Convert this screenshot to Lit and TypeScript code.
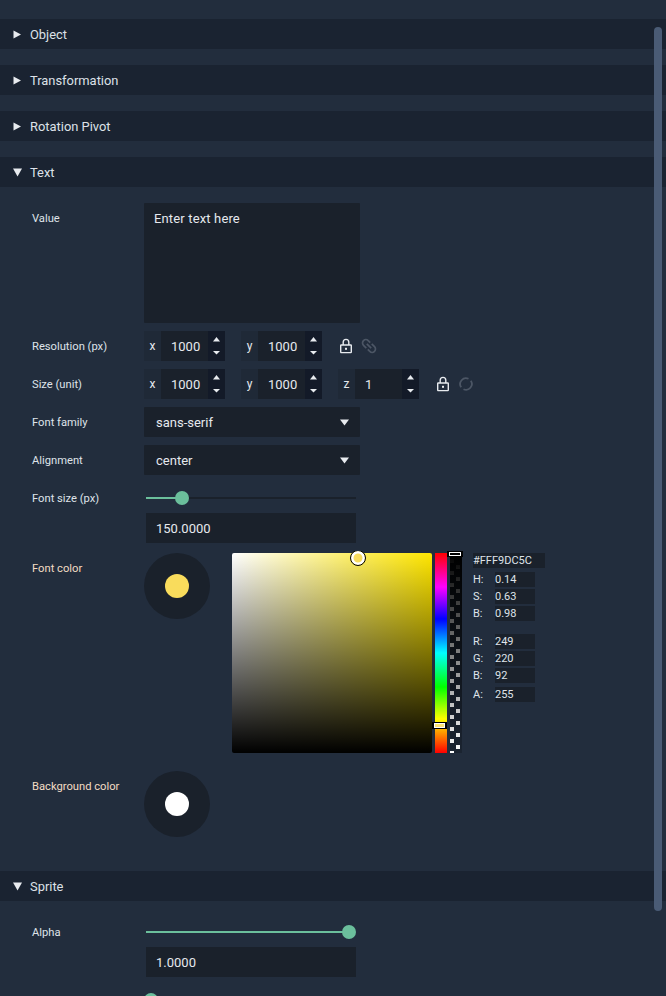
import { LitElement, html, css, svg } from 'lit';
import { customElement } from 'lit/decorators.js';

const lock = html`<svg class="ico lock" width="14" height="16" viewBox="0 0 14 16" fill="none" stroke="#e8ebef" stroke-width="1.4">
  <path d="M4.2 7V4.2a2.8 2.8 0 0 1 5.6 0V7" />
  <rect x="1.7" y="7" width="10.6" height="7.6" rx="0.6" />
  <rect x="6" y="9.8" width="2" height="2" fill="#e8ebef" stroke="none" />
</svg>`;

const chain = html`<svg class="ico" width="16" height="16" viewBox="0 0 16 16" fill="none" stroke="#4c5665" stroke-width="1.7">
  <path d="M9.2 4.6 7.2 2.6a3.3 3.3 0 0 0-4.7 4.7L5.3 10.1" />
  <path d="M6.8 11.4 8.8 13.4a3.3 3.3 0 0 0 4.7-4.7L10.7 5.9" />
  <path d="M5.8 5.8 10.2 10.2" />
</svg>`;

const ring = html`<svg class="ico" width="16" height="16" viewBox="0 0 16 16" fill="none" stroke="#4c5665" stroke-width="1.8">
  <path d="M10.5 2.8A5.8 5.8 0 0 0 3.2 11.3" />
  <path d="M5.5 13.2A5.8 5.8 0 0 0 12.8 4.7" />
</svg>`;

const spinner = html`<div class="spin">
  <svg width="7" height="5" viewBox="0 0 7 5">${svg`<path d="M3.5 0 7 4.5H0z" fill="#e8ebef" />`}</svg>
  <svg width="7" height="4" viewBox="0 0 7 4">${svg`<path d="M0 0H7L3.5 3.5z" fill="#e8ebef" />`}</svg>
</div>`;

const alphaBar = html`<svg class="alpha-art" width="12" height="200" viewBox="0 0 12 200">
  <defs>
    <pattern id="cells" width="12" height="12" patternUnits="userSpaceOnUse">
      <rect x="0" y="6" width="4" height="4" fill="#fff" />
      <rect x="6" y="0" width="4" height="4" fill="#fff" />
    </pattern>
    <linearGradient id="fade" x1="0" y1="0" x2="0" y2="1">
      <stop offset="0" stop-color="#000" />
      <stop offset="1" stop-color="#000" stop-opacity="0" />
    </linearGradient>
  </defs>
  <rect width="12" height="200" fill="#1b2431" />
  <rect width="12" height="200" fill="url(#cells)" />
  <rect width="12" height="200" fill="url(#fade)" />
</svg>`;

@customElement('app-root')
export class AppRoot extends LitElement {
  static styles = css`
    :host {
      display: block;
      height: 996px;
      overflow: hidden;
      position: relative;
      background: #222d3d;
      color: #e6e9ee;
      font-family: Roboto, sans-serif;
      font-size: 13px;
    }
    .panel {
      padding-top: 19px;
    }
    .head {
      height: 30px;
      margin-bottom: 16px;
      display: flex;
      align-items: center;
      padding-left: 13px;
      gap: 8px;
      background: #1a2331;
      color: #dde1e8;
      font-size: 12.9px;
    }
    .head svg {
      width: 9px;
      height: 9px;
      flex: none;
    }
    .body {
      padding-left: 32px;
      display: flex;
      flex-direction: column;
    }
    .row {
      display: flex;
      align-items: flex-start;
      margin-bottom: 8px;
    }
    .label {
      width: 112px;
      height: 30px;
      flex: none;
      font-size: 11.2px;
      line-height: 32px;
      color: #dfe3e9;
    }
    .label.peach {
      color: #f3dcc4;
    }
    .area {
      width: 216px;
      height: 120px;
      box-sizing: border-box;
      padding: 8px 10px;
      background: #1a212b;
      border-radius: 1px;
      line-height: 16px;
      letter-spacing: 0.15px;
    }
    .nums {
      display: flex;
      align-items: center;
    }
    .num {
      display: flex;
      height: 30px;
      margin-right: 16px;
      line-height: 31px;
    }
    .pre {
      width: 17px;
      text-align: center;
      background: #1f2937;
      font-size: 12px;
    }
    .val {
      width: 47px;
      box-sizing: border-box;
      padding-left: 10px;
      background: #1a212b;
    }
    .spin {
      width: 17px;
      background: #131a28;
      display: flex;
      flex-direction: column;
      align-items: center;
      justify-content: space-between;
      padding: 6px 0;
      box-sizing: border-box;
    }
    .spin svg {
      display: block;
    }
    .ico {
      display: block;
      margin-right: 8px;
    }
    .lock {
      margin-left: 1px;
    }
    .select {
      width: 216px;
      height: 30px;
      box-sizing: border-box;
      padding: 0 12px;
      display: flex;
      align-items: center;
      justify-content: space-between;
      background: #1a212b;
      border-radius: 1px;
    }
    .select svg {
      margin-right: -1px;
    }
    .slider-col {
      margin-left: 2px;
      width: 210px;
    }
    .slider {
      height: 30px;
      position: relative;
      display: flex;
      align-items: flex-start;
    }
    .track {
      width: 100%;
      height: 2px;
      margin-top: 14px;
      background: linear-gradient(to right, #6bbf9c var(--p), #1a212b var(--p));
    }
    .thumb {
      position: absolute;
      top: 8px;
      width: 14px;
      height: 14px;
      margin-left: -7px;
      border-radius: 50%;
      background: #6bbf9c;
    }
    .field {
      height: 30px;
      padding-left: 10px;
      line-height: 31px;
      background: #1a212b;
    }
    .swatch {
      width: 66px;
      height: 66px;
      flex: none;
      border-radius: 50%;
      background: #1a212b;
      display: flex;
      align-items: center;
      justify-content: center;
    }
    .dot {
      width: 24px;
      height: 24px;
      border-radius: 50%;
    }
    .picker {
      display: flex;
      margin-left: 22px;
    }
    .sv {
      position: relative;
      width: 200px;
      height: 200px;
      border-radius: 2px;
      background:
        linear-gradient(to bottom, transparent, #000),
        linear-gradient(to right, #fff, #ffe600);
    }
    .sv i {
      position: absolute;
      left: 118px;
      top: -3px;
      width: 16px;
      height: 16px;
      box-sizing: border-box;
      border: 1.5px solid #000;
      box-shadow: inset 0 0 0 2.5px #fff;
      border-radius: 50%;
      background: #f9dc5c;
      clip-path: inset(1px 0 0 0);
    }
    .hue {
      position: relative;
      width: 12px;
      height: 200px;
      margin-left: 3px;
      background: linear-gradient(to bottom, #f00, #f0f 17%, #00f 33%, #0ff 50%, #0f0 67%, #ff0 83%, #f00);
    }
    .alpha {
      position: relative;
      width: 12px;
      height: 200px;
      margin-left: 3px;
    }
    .alpha-art {
      display: block;
    }
    .grip {
      position: absolute;
      box-sizing: border-box;
      border: solid #000;
      border-width: 1px 2px;
      box-shadow: inset 0 0 0 1px #fff;
    }
    .hue .grip {
      left: -3px;
      right: 0;
      top: 169px;
      height: 7px;
      background: rgba(255, 255, 255, 0.45);
    }
    .alpha .grip {
      left: -3px;
      right: -1px;
      top: -2px;
      height: 6px;
    }
    .vals {
      margin-left: 11px;
      font-size: 11px;
      color: #dfe3e9;
    }
    .hex {
      width: 72px;
      height: 15px;
      line-height: 15px;
      margin-bottom: 4px;
      background: #1a212b;
    }
    .line {
      display: flex;
      height: 15px;
      line-height: 15px;
      margin-bottom: 2px;
    }
    .line b {
      font-weight: 400;
      width: 22px;
    }
    .line span {
      width: 40px;
      background: #1a212b;
    }
    .line.sep {
      margin-top: 13px;
    }
    .line.a {
      margin-top: 4px;
    }
    .scroll {
      position: absolute;
      left: 654px;
      top: 27px;
      width: 8px;
      height: 884px;
      border-radius: 4px;
      background: #4a5b75;
    }
  `;

  private head(title: string, open: boolean) {
    return html`<div class="head">
      <svg viewBox="0 0 9 9"><path d=${open ? 'M0 .5H9L4.5 8.5z' : 'M.5 .5 8 4.5 .5 8.5z'} fill="#e8ebef" /></svg>
      <span>${title}</span>
    </div>`;
  }

  private num(prefix: string, value: string) {
    return html`<div class="num"><div class="pre">${prefix}</div><div class="val">${value}</div>${spinner}</div>`;
  }

  private select(value: string) {
    return html`<div class="select">
      <span>${value}</span>
      <svg width="9" height="7" viewBox="0 0 9 7"><path d="M0 .5H9L4.5 6.5z" fill="#e8ebef" /></svg>
    </div>`;
  }

  private slider(pct: number, value: string) {
    return html`<div class="slider-col">
      <div class="slider">
        <div class="track" style="--p:${pct}%"></div>
        <div class="thumb" style="left:${pct}%"></div>
      </div>
      <div class="field">${value}</div>
    </div>`;
  }

  render() {
    return html`
      <div class="panel">
        ${this.head('Object', false)}
        ${this.head('Transformation', false)}
        ${this.head('Rotation Pivot', false)}
        ${this.head('Text', true)}
        <div class="body">
          <div class="row"><div class="label">Value</div><div class="area">Enter text here</div></div>
          <div class="row">
            <div class="label">Resolution (px)</div>
            <div class="nums">${this.num('x', '1000')}${this.num('y', '1000')}${lock}${chain}</div>
          </div>
          <div class="row">
            <div class="label">Size (unit)</div>
            <div class="nums">${this.num('x', '1000')}${this.num('y', '1000')}${this.num('z', '1')}${lock}${ring}</div>
          </div>
          <div class="row"><div class="label">Font family</div>${this.select('sans-serif')}</div>
          <div class="row"><div class="label">Alignment</div>${this.select('center')}</div>
          <div class="row" style="margin-bottom:10px">
            <div class="label">Font size (px)</div>
            ${this.slider(17, '150.0000')}
          </div>
          <div class="row" style="margin-bottom:18px">
            <div class="label peach">Font color</div>
            <div class="swatch"><div class="dot" style="background:#f9dc5c"></div></div>
            <div class="picker">
              <div class="sv"><i></i></div>
              <div class="hue"><div class="grip"></div></div>
              <div class="alpha">${alphaBar}<div class="grip"></div></div>
              <div class="vals">
                <div class="hex">#FFF9DC5C</div>
                <div class="line"><b>H:</b><span>0.14</span></div>
                <div class="line"><b>S:</b><span>0.63</span></div>
                <div class="line"><b>B:</b><span>0.98</span></div>
                <div class="line sep"><b>R:</b><span>249</span></div>
                <div class="line"><b>G:</b><span>220</span></div>
                <div class="line"><b>B:</b><span>92</span></div>
                <div class="line a"><b>A:</b><span>255</span></div>
              </div>
            </div>
          </div>
          <div class="row" style="margin-bottom:34px">
            <div class="label peach">Background color</div>
            <div class="swatch"><div class="dot" style="background:#fff"></div></div>
          </div>
        </div>
        ${this.head('Sprite', true)}
        <div class="body">
          <div class="row">
            <div class="label">Alpha</div>
            ${this.slider(96.7, '1.0000')}
          </div>
          <div class="row">
            <div class="label"></div>
            ${this.slider(2.4, '')}
          </div>
        </div>
      </div>
      <div class="scroll"></div>
    `;
  }
}
